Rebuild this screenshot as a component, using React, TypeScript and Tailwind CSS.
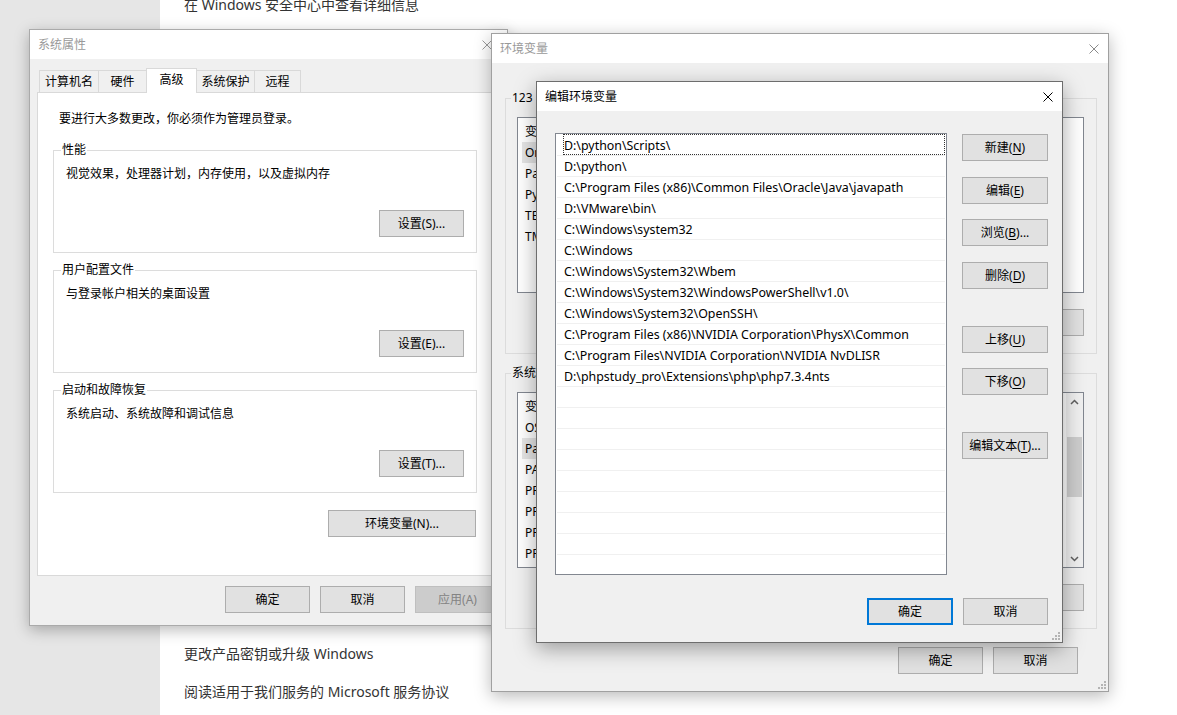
import type { ReactNode } from 'react'

function CloseX({ color }: { color: string }) {
  return (
    <svg width="10" height="10" viewBox="0 0 10 10">
      <path d="M0.5 0.5L9.5 9.5M9.5 0.5L0.5 9.5" stroke={color} strokeWidth="1" fill="none" />
    </svg>
  )
}

function Grip() {
  const dots = [[6, 0], [6, 3], [3, 3], [6, 6], [3, 6], [0, 6]]
  return (
    <svg width="8" height="8" viewBox="0 0 8 8" className="absolute bottom-[2px] right-[2px]">
      {dots.map(([x, y]) => (
        <rect key={`${x}-${y}`} x={x} y={y} width="2" height="2" fill="#b4b4b4" />
      ))}
    </svg>
  )
}

function Btn({ children, className = 'w-[85px]' }: { children: ReactNode; className?: string }) {
  return (
    <div className={`h-[27px] flex items-center justify-center border border-[#adadad] bg-[#e1e1e1] text-[12px] text-black ${className}`}>
      {children}
    </div>
  )
}

function Group({ title, desc, btn }: { title: string; desc: string; btn: string }) {
  return (
    <fieldset className="w-[424px] border border-[#dcdcdc] p-0 m-0">
      <legend className="ml-[7px] px-[1px] text-[12px] leading-[16px]">{title}</legend>
      <div className="flex flex-col pl-[12px] pr-[12px] pb-[15px]">
        <p className="mt-[8px] text-[12px] leading-[16px]">{desc}</p>
        <div className="mt-[28px] self-end">
          <Btn>{btn}</Btn>
        </div>
      </div>
    </fieldset>
  )
}

const tabs = [
  { label: '计算机名', w: 'w-[60px]' },
  { label: '硬件', w: 'w-[49px]' },
  { label: '高级', w: 'w-[51px]' },
  { label: '系统保护', w: 'w-[59px]' },
  { label: '远程', w: 'w-[47px]' },
]

function SystemProps() {
  return (
    <div className="absolute left-[29px] top-[29px] w-[479px] h-[597px] border border-[#aaaaaa] bg-[#f0f0f0] shadow-[0_4px_14px_rgba(0,0,0,0.28)] flex flex-col">
      <div className="h-[29px] bg-white flex items-center pl-[8px] pr-[15px]">
        <span className="text-[12px] text-[#999999]">系统属性</span>
        <span className="ml-auto flex"><CloseX color="#999999" /></span>
      </div>
      <div className="px-[7px] pt-[9px]">
        <div className="flex items-end h-[24px] pl-[2px]">
          {tabs.map((t, i) =>
            t.label === '高级' ? (
              <div key={t.label} className={`relative z-10 -ml-px -mb-px h-[25px] ${t.w} bg-white border border-b-0 border-[#d9d9d9] flex items-center justify-center text-[12px] pb-[2px]`}>
                {t.label}
              </div>
            ) : (
              <div key={t.label} className={`${i > 0 ? '-ml-px' : ''} h-[22px] ${t.w} border border-b-0 border-[#d9d9d9] flex items-center justify-center text-[12px]`}>
                {t.label}
              </div>
            ),
          )}
        </div>
        <div className="h-[484px] border border-[#d9d9d9] bg-white px-[15px] pt-[18px]">
          <p className="pl-[6px] text-[12px] leading-[16px]">要进行大多数更改，你必须作为管理员登录。</p>
          <div className="mt-[15px] flex flex-col gap-[9px]">
            <Group title="性能" desc="视觉效果，处理器计划，内存使用，以及虚拟内存" btn="设置(S)..." />
            <Group title="用户配置文件" desc="与登录帐户相关的桌面设置" btn="设置(E)..." />
            <Group title="启动和故障恢复" desc="系统启动、系统故障和调试信息" btn="设置(T)..." />
          </div>
          <div className="w-[424px] flex justify-end mt-[17px]">
            <Btn className="w-[148px] mr-px">环境变量(N)...</Btn>
          </div>
        </div>
        <div className="flex justify-end gap-[10px] mt-[10px]">
          <Btn>确定</Btn>
          <Btn>取消</Btn>
          <div className="h-[27px] w-[85px] flex items-center justify-center border border-[#bfbfbf] bg-[#cccccc] text-[12px] text-[#838383]">
            应用(A)
          </div>
        </div>
      </div>
    </div>
  )
}

function VarList({ rows, selected, scroll }: { rows: string[]; selected: number; scroll?: boolean }) {
  return (
    <div className="h-[176px] border border-[#828790] bg-white flex">
      <div className="flex-1 flex flex-col text-[12px]">
        <div className="h-[24px] pt-[3px] flex items-center">
          <span className="w-[160px] pl-[7px]">变量</span>
          <span>值</span>
        </div>
        {rows.map((r, i) => (
          <div key={r} className="h-[21px] flex">
            <div className={`w-[150px] ml-[4px] pl-[3px] flex items-center ${i === selected ? 'bg-[#e5e5e5]' : ''}`}>{r}</div>
          </div>
        ))}
      </div>
      {scroll && (
        <div className="w-[17px] bg-[#f0f0f0] flex flex-col items-center">
          <div className="h-[17px] flex items-center justify-center">
            <svg width="9" height="6" viewBox="0 0 9 6"><path d="M1 5L4.5 1.5L8 5" stroke="#606060" strokeWidth="1.5" fill="none" /></svg>
          </div>
          <div className="mt-[27px] w-[15px] h-[60px] bg-[#cdcdcd]" />
          <div className="mt-auto h-[17px] flex items-center justify-center">
            <svg width="9" height="6" viewBox="0 0 9 6"><path d="M1 1L4.5 4.5L8 1" stroke="#606060" strokeWidth="1.5" fill="none" /></svg>
          </div>
        </div>
      )}
    </div>
  )
}

function EnvGroup({ title, rows, selected, scroll, className }: { title: string; rows: string[]; selected: number; scroll?: boolean; className: string }) {
  return (
    <fieldset className={`ml-[13px] w-[592px] border border-[#dcdcdc] p-0 ${className}`}>
      <legend className="ml-[5px] px-[1px] text-[12px] leading-[16px]">{title}</legend>
      <div className="pl-[11px] pr-[12px] pb-[17px]">
        <div className="mt-[11px]">
          <VarList rows={rows} selected={selected} scroll={scroll} />
        </div>
        <div className="mt-[16px] flex justify-end gap-[10px]">
          <Btn>新建(N)...</Btn>
          <Btn>编辑(E)...</Btn>
          <Btn>删除(D)</Btn>
        </div>
      </div>
    </fieldset>
  )
}

function EnvVars() {
  return (
    <div className="absolute left-[491px] top-[33px] w-[618px] h-[659px] border border-[#a0a0a0] bg-[#f0f0f0] shadow-[0_4px_16px_rgba(0,0,0,0.28)] flex flex-col">
      <div className="h-[29px] bg-white flex items-center pl-[8px] pr-[9px]">
        <span className="text-[12px] text-[#999999]">环境变量</span>
        <span className="ml-auto flex"><CloseX color="#8a8a8a" /></span>
      </div>
      <EnvGroup className="mt-[27px]" title="123 的用户变量(U)" rows={['OneDrive', 'Path', 'PyCharm', 'TEMP', 'TMP']} selected={0} />
      <EnvGroup
        className="mt-[11px]"
        title="系统变量(S)"
        rows={['OS', 'Path', 'PATHEXT', 'PROCESSOR_ARCHITECTURE', 'PROCESSOR_IDENTIFIER', 'PROCESSOR_LEVEL', 'PROCESSOR_REVISION']}
        selected={1}
        scroll
      />
      <div className="mt-[18px] pr-[30px] flex justify-end gap-[10px]">
        <Btn>确定</Btn>
        <Btn>取消</Btn>
      </div>
      <Grip />
    </div>
  )
}

const paths = [
  'D:\\python\\Scripts\\',
  'D:\\python\\',
  'C:\\Program Files (x86)\\Common Files\\Oracle\\Java\\javapath',
  'D:\\VMware\\bin\\',
  'C:\\Windows\\system32',
  'C:\\Windows',
  'C:\\Windows\\System32\\Wbem',
  'C:\\Windows\\System32\\WindowsPowerShell\\v1.0\\',
  'C:\\Windows\\System32\\OpenSSH\\',
  'C:\\Program Files (x86)\\NVIDIA Corporation\\PhysX\\Common',
  'C:\\Program Files\\NVIDIA Corporation\\NVIDIA NvDLISR',
  'D:\\phpstudy_pro\\Extensions\\php\\php7.3.4nts',
]

const rows = [...paths, ...Array(9).fill('')]

function M({ pre, k, post = '' }: { pre: string; k: string; post?: string }) {
  return (
    <span>
      {pre}(<span className="underline underline-offset-2">{k}</span>){post}
    </span>
  )
}

function EditEnv() {
  return (
    <div className="absolute left-[536px] top-[81px] w-[527px] h-[562px] border border-[#6d6d6d] bg-[#f0f0f0] shadow-[0_6px_20px_rgba(0,0,0,0.35)] flex flex-col">
      <div className="h-[29px] bg-white flex items-center pl-[8px] pr-[9px]">
        <span className="text-[12px] text-black">编辑环境变量</span>
        <span className="ml-auto flex"><CloseX color="#000000" /></span>
      </div>
      <div className="flex pl-[18px] pt-[22px]">
        <div className="w-[392px] h-[442px] border border-[#828790] bg-white pt-[1px] px-[1px] overflow-hidden">
          {rows.map((r, i) => (
            <div key={i} className="h-[21px] border-b border-[#f0f0f0] flex items-stretch text-[12.4px] text-black">
              {i === 0 ? (
                <div className="ml-[6px] flex-1 -mt-px border border-dotted border-[#333333] flex items-center pt-[3px]">{r}</div>
              ) : (
                <div className="pl-[7px] pt-[2px] flex items-center">{r}</div>
              )}
            </div>
          ))}
        </div>
        <div className="ml-[15px] flex flex-col">
          <Btn className="w-[86px] mt-[1px]"><M pre="新建" k="N" /></Btn>
          <Btn className="w-[86px] mt-[16px]"><M pre="编辑" k="E" /></Btn>
          <Btn className="w-[86px] mt-[15px]"><M pre="浏览" k="B" post="..." /></Btn>
          <Btn className="w-[86px] mt-[16px]"><M pre="删除" k="D" /></Btn>
          <Btn className="w-[86px] mt-[37px]"><M pre="上移" k="U" /></Btn>
          <Btn className="w-[86px] mt-[15px]"><M pre="下移" k="O" /></Btn>
          <Btn className="w-[86px] mt-[37px]"><M pre="编辑文本" k="T" post="..." /></Btn>
        </div>
      </div>
      <div className="mt-[23px] pr-[14px] flex justify-end gap-[10px]">
        <div className="h-[27px] w-[86px] flex items-center justify-center border-2 border-[#0078d7] bg-[#e1e1e1] text-[12px] text-black">
          确定
        </div>
        <Btn>取消</Btn>
      </div>
      <Grip />
    </div>
  )
}

export default function App() {
  return (
    <div className="relative w-[1177px] h-[715px] overflow-hidden flex bg-white text-black font-['Noto_Sans','Noto_Sans_CJK_SC',sans-serif]">
      <div className="w-[160px] bg-[#e6e6e6]" />
      <div className="flex-1 flex flex-col pl-[24px] pb-[13px] text-[14px] text-[#333333]">
        <p className="-mt-[5px] leading-[20px]">在 Windows 安全中心中查看详细信息</p>
        <p className="mt-auto leading-[20px]">更改产品密钥或升级 Windows</p>
        <p className="mt-[18px] leading-[20px]">阅读适用于我们服务的 Microsoft 服务协议</p>
      </div>
      <SystemProps />
      <EnvVars />
      <EditEnv />
    </div>
  )
}
